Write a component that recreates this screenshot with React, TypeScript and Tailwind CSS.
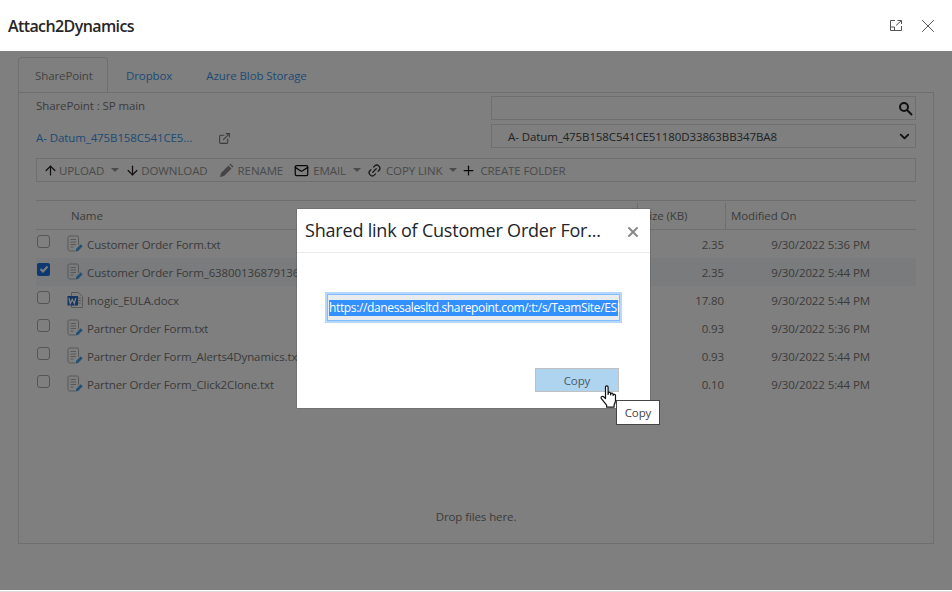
import { ArrowDown, ArrowUp, ChevronDown, ExternalLink, Link2, Mail, Plus, X } from "lucide-react";

const files = [
  { name: "Customer Order Form.txt", size: "2.35", date: "9/30/2022 5:36 PM" },
  { name: "Customer Order Form_638001368791361234.txt", size: "2.35", date: "9/30/2022 5:44 PM", checked: true },
  { name: "Inogic_EULA.docx", size: "17.80", date: "9/30/2022 5:44 PM", word: true },
  { name: "Partner Order Form.txt", size: "0.93", date: "9/30/2022 5:36 PM" },
  { name: "Partner Order Form_Alerts4Dynamics.txt", size: "0.93", date: "9/30/2022 5:44 PM" },
  { name: "Partner Order Form_Click2Clone.txt", size: "0.10", date: "9/30/2022 5:44 PM" },
];

const TextFileIcon = () => (
  <svg width="17" height="18" viewBox="0 0 17 18" fill="none">
    <path d="M11.5 10V2.5a1.5 1.5 0 0 0-1.5-1.5H2.5A1.5 1.5 0 0 0 1 2.5v12A1.5 1.5 0 0 0 2.5 16H8" stroke="#b0b0b0" />
    <path d="M3.5 4.5h5.5M3.5 7h5.5M3.5 9.5h5.5M3.5 12h3" stroke="#b0b0b0" />
    <path d="M8.5 16.5l.6-2.6 4.6-4.6 2 2-4.6 4.6z" fill="#46a0e6" />
  </svg>
);

const WordIcon = () => (
  <svg width="17" height="18" viewBox="0 0 17 18" fill="none">
    <path d="M4.5 1.5h7l4 4v11h-11z" fill="#fff" stroke="#b0b0b0" />
    <path d="M11 7h3M11 9.5h3M11 12h3" stroke="#b0b0b0" />
    <rect x="0.5" y="5" width="10.5" height="9.5" fill="#2b6cc4" />
    <path d="M2 7l1.3 5.5 2-4 2 4L8.7 7" stroke="#fff" strokeWidth="1.3" />
  </svg>
);

const PencilIcon = () => (
  <svg width="15" height="15" viewBox="0 0 15 15">
    <path d="M1 14l1-4 7.5-7.5 3 3L5 13z M10.5 1.5l1-1 3 3-1 1z" fill="#8a8a8a" />
  </svg>
);

const MaximizeIcon = () => (
  <svg width="14" height="13" viewBox="0 0 14 13" fill="none" stroke="#555">
    <path d="M6 1.5H1.5v10h11V7M1.5 8h4v3.5M7 6.5l5.5-5M8.5 1.5h4V5" />
  </svg>
);

const HandCursor = () => (
  <svg width="18" height="24" viewBox="0 0 18 24" fill="#fff" stroke="#111" strokeWidth="1.2" strokeLinejoin="round">
    <path d="M5.5 2.2a1.3 1.3 0 0 1 2.6 0v7.3l.2-1.5a1.2 1.2 0 0 1 2.3.2v1.6l.3-1a1.2 1.2 0 0 1 2.2.3v1.4l.3-.6a1.1 1.1 0 0 1 2.1.4v5c0 1.8-.5 3-1.4 4.6v2.2H6.6v-2L1.4 13.6a1.4 1.4 0 0 1 2.2-1.8l1.9 1.7z" />
  </svg>
);

const ToolItem = ({ icon, label, caret }: { icon: React.ReactNode; label: string; caret?: boolean }) => (
  <div className="flex items-center gap-[4px]">
    {icon}
    <span className={caret ? "pt-[1px]" : "pt-[1px] pr-[5px]"}>{label}</span>
    {caret && <span className="ml-[3px] h-0 w-0 border-x-[4px] border-t-[4px] border-x-transparent border-t-[#949494]" />}
  </div>
);

export default function App() {
  return (
    <div className="flex h-[592px] w-[952px] flex-col overflow-hidden bg-white text-[11.5px] tracking-[-0.1px] text-[#6c6c6c] [font-family:'Open_Sans','Noto_Sans',sans-serif]">
      <header className="flex h-[51px] shrink-0 items-center justify-between bg-white pl-2 pr-[13px]">
        <h1 className="text-[16px] font-semibold tracking-[-0.6px] text-[#262626]">Attach2Dynamics</h1>
        <div className="flex items-center gap-[14px] text-[#444]">
          <MaximizeIcon />
          <X size={22} strokeWidth={1} />
        </div>
      </header>

      <main className="relative h-[539px] shrink-0 px-[18px] pt-[6px]">
        <div className="flex h-[35px] items-end text-[#3a94ea]">
          <div className="flex h-[35px] w-[90px] items-center rounded-t border border-b-0 border-[#dedede] bg-white pl-4 pt-[2px] text-[#858585]">SharePoint</div>
          <div className="flex h-[35px] items-center pl-[18px] pr-[34px] pt-[2px]">Dropbox</div>
          <div className="flex h-[35px] items-center pt-[2px]">Azure Blob Storage</div>
        </div>

        <section className="flex h-[452px] flex-col border border-[#dedede] px-[17px] pt-[3px]">
          <div className="flex h-[52px] justify-between">
            <div className="pt-[1px]">
              <div className="h-[24px] leading-[18px] text-[#787878]">SharePoint : SP main</div>
              <div className="flex h-[28px] items-center pt-[6px] text-[#3a94ea]">
                <span className="w-[182px] truncate">A- Datum_475B158C541CE5...</span>
                <ExternalLink size={13} className="text-[#787878]" />
              </div>
            </div>
            <div className="flex w-[425px] flex-col gap-1">
              <div className="flex h-6 items-center justify-end border border-[#dedede] pr-[2px]">
                <svg width="15" height="15" viewBox="0 0 15 15" fill="none" stroke="#222" strokeWidth="2"><circle cx="6" cy="6" r="4" /><path d="M9 9l5 5" /></svg>
              </div>
              <div className="flex h-6 items-center justify-between border border-[#dedede] pl-[16px] pr-[3px] pt-[1px] text-[#444]">
                <span>A- Datum_475B158C541CE51180D33863BB347BA8</span>
                <ChevronDown size={15} strokeWidth={3} className="text-[#222]" />
              </div>
            </div>
          </div>

          <div className="mt-[10px] flex h-6 items-center gap-[6px] border border-[#dedede] pl-[6px] text-[#949494]">
            <ToolItem icon={<ArrowUp size={15} className="-mr-[3px] text-[#222]" />} label="UPLOAD" caret />
            <ToolItem icon={<ArrowDown size={15} className="-mr-[3px] text-[#222]" />} label="DOWNLOAD" />
            <ToolItem icon={<PencilIcon />} label="RENAME" />
            <ToolItem icon={<Mail size={15} className="text-[#111]" />} label="EMAIL" caret />
            <ToolItem icon={<Link2 size={15} className="-rotate-45 text-[#333]" />} label="COPY LINK" caret />
            <ToolItem icon={<Plus size={15} className="-ml-[2px] text-[#111]" />} label="CREATE FOLDER" />
          </div>

          <div className="mt-[18px] flex h-[30px] border-y border-[#dedede] pt-[2px] text-[#787878]">
            <div className="flex w-[601px] items-center pl-[35px]">Name</div>
            <div className="flex w-[88px] items-center border-l border-[#dedede] pl-[5px]">Size (KB)</div>
            <div className="flex flex-1 items-center border-l border-[#dedede] pl-[5px]">Modified On</div>
          </div>

          {files.map((file) => (
            <div key={file.name} className={`flex h-[28px] items-center ${file.checked ? "bg-[#f3f6fa]" : ""}`}>
              <div className="flex w-[31px] pb-[6px] pl-[1px]">
                {file.checked ? (
                  <span className="flex h-[13px] w-[13px] items-center justify-center rounded-[2px] bg-[#1a70e0]">
                    <svg width="10" height="10" viewBox="0 0 10 10" fill="none" stroke="#fff" strokeWidth="2"><path d="M1.5 5l2.5 2.5 4.5-5" /></svg>
                  </span>
                ) : (
                  <span className="h-[13px] w-[13px] rounded-[3px] border border-[#aaa] bg-white" />
                )}
              </div>
              <div className="flex w-[570px] items-center gap-[3px] pt-[1px]">
                <span className="-mt-[2px]">{file.word ? <WordIcon /> : <TextFileIcon />}</span>
                <span className="truncate pt-[1px] text-[#787878]">{file.name}</span>
              </div>
              <div className="w-[88px] pr-[1px] pt-[1px] text-right text-[#787878]">{file.size}</div>
              <div className="flex-1 pr-[46px] pt-[1px] text-right text-[#787878]">{file.date}</div>
            </div>
          ))}

          <div className="mt-auto pb-[18px] text-center text-[#787878]">Drop files here.</div>
        </section>

        <div className="absolute inset-0 bg-black/50" />

        <div className="absolute left-[297px] top-[158px] flex h-[199px] w-[353px] flex-col bg-white shadow-[0_0_1px_#333]">
          <div className="flex h-[44px] items-center justify-between border-b border-[#e9ecef] pl-2 pr-[9px]">
            <span className="text-[18px] tracking-[-0.2px] text-[#212529]">Shared link of Customer Order For...</span>
            <X size={16} strokeWidth={3} className="mt-[2px] text-[#888]" />
          </div>
          <div className="flex flex-1 flex-col px-[28px] pt-[39px]">
            <div className="w-[297px] border-2 border-[#b8d8fb] bg-white">
              <div className="flex h-[27px] items-center border border-[#80bdff] bg-[#e9ecef] px-[1px]">
                <span className="block w-full whitespace-nowrap bg-[#3390ff] text-[12px] leading-[16px] tracking-[-0.36px] text-white">https://danessalesltd.sharepoint.com/:t:/s/TeamSite/ESI</span>
              </div>
            </div>
            <div className="mt-[45px] flex justify-end pr-[3px]">
              <div className="flex h-6 w-[84px] items-center justify-center border border-[#c0c0c0] bg-[#aed4f0] pt-[1px] text-[#4a5a68]">Copy</div>
            </div>
          </div>
          <div className="absolute left-[303px] top-[176px]"><HandCursor /></div>
          <div className="absolute left-[319px] top-[191px] flex h-[25px] w-[44px] items-center justify-center border border-[#444] bg-white text-[#444]">Copy</div>
        </div>
      </main>
      <footer className="h-[2px] border-t border-white bg-[#ddd]" />
    </div>
  );
}
